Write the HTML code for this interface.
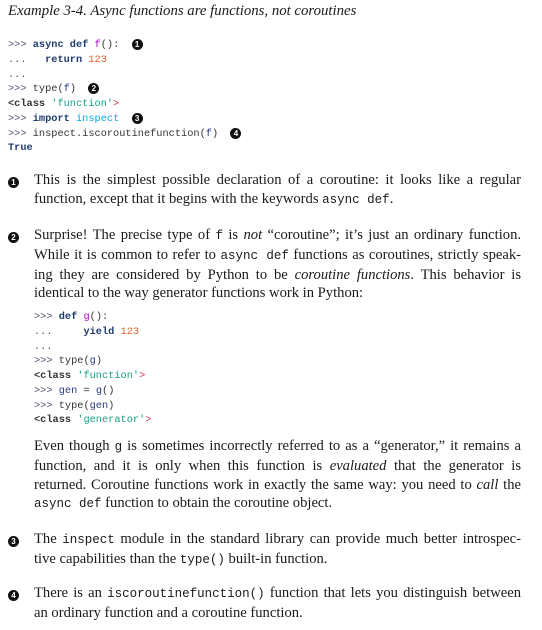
<!DOCTYPE html>
<html><head><meta charset="utf-8"><style>
body{margin:0;width:542px;height:630px;background:#fff;position:relative;overflow:hidden;font-family:"Liberation Serif",serif;color:#1a1a1a}
.a{position:absolute}
.t{left:8px;top:3px;font-style:italic;font-size:14.8px}
.code{font-family:"Liberation Mono",monospace;font-size:10.3px;line-height:14.75px;white-space:pre;color:#333}
.p{color:#4a5070}.k{color:#1f3d6e;font-weight:bold}.m{color:#b000d0}.n{color:#e8602c}.s{color:#16a085}.c{color:#0aa8e0}.kw{font-weight:bold;color:#333}.r{color:#d0304a}.v{color:#2a3a80}
.b{display:inline-block;width:11px;height:11px;border-radius:50%;background:#111;color:#fff;font:bold 8px "Liberation Sans",sans-serif;text-align:center;line-height:11px;vertical-align:0px}
.txt{left:34px;width:487px;font-size:14.6px;line-height:18.8px}
.txt div{text-align:justify;text-align-last:justify;white-space:nowrap}
.txt div.l{text-align-last:left}
.tt{font-family:"Liberation Mono",monospace;font-size:12.5px}
.mk{left:8px}
</style></head><body>
<div class="a t">Example 3-4. Async functions are functions, not coroutines</div>
<div class="a code" style="left:8px;top:38px"><span class="p">&gt;&gt;&gt;</span> <span class="k">async def</span> <span class="m">f</span>():  <span class="b">1</span>
<span class="p">...</span>   <span class="k">return</span> <span class="n">123</span>
<span class="p">...</span>
<span class="p">&gt;&gt;&gt;</span> type(<span class="v">f</span>)  <span class="b">2</span>
<span class="kw">&lt;class</span> <span class="s">'function'</span><span class="r">&gt;</span>
<span class="p">&gt;&gt;&gt;</span> <span class="k">import</span> <span class="c">inspect</span>  <span class="b">3</span>
<span class="p">&gt;&gt;&gt;</span> inspect.iscoroutinefunction(<span class="v">f</span>)  <span class="b">4</span>
<span class="k">True</span></div>

<div class="a mk" style="top:172px"><span class="b">1</span></div>
<div class="a txt" style="top:171px"><div>This is the simplest possible declaration of a coroutine: it looks like a regular</div><div class="l">function, except that it begins with the keywords <span class="tt">async def</span>.</div></div>

<div class="a mk" style="top:227px"><span class="b">2</span></div>
<div class="a txt" style="top:226px"><div>Surprise! The precise type of <span class="tt">f</span> is <i>not</i> “coroutine”; it’s just an ordinary function.</div><div>While it is common to refer to <span class="tt">async def</span> functions as coroutines, strictly speak-</div><div>ing they are considered by Python to be <i>coroutine functions</i>. This behavior is</div><div class="l">identical to the way generator functions work in Python:</div></div>

<div class="a code" style="left:34px;top:310px"><span class="p">&gt;&gt;&gt;</span> <span class="k">def</span> <span class="m">g</span>():
<span class="p">...</span>     <span class="k">yield</span> <span class="n">123</span>
<span class="p">...</span>
<span class="p">&gt;&gt;&gt;</span> type(<span class="v">g</span>)
<span class="kw">&lt;class</span> <span class="s">'function'</span><span class="r">&gt;</span>
<span class="p">&gt;&gt;&gt;</span> <span class="v">gen</span> = <span class="v">g</span>()
<span class="p">&gt;&gt;&gt;</span> type(<span class="v">gen</span>)
<span class="kw">&lt;class</span> <span class="s">'generator'</span><span class="r">&gt;</span></div>

<div class="a txt" style="top:437px"><div>Even though <span class="tt">g</span> is sometimes incorrectly referred to as a “generator,” it remains a</div><div>function, and it is only when this function is <i>evaluated</i> that the generator is</div><div>returned. Coroutine functions work in exactly the same way: you need to <i>call</i> the</div><div class="l"><span class="tt">async def</span> function to obtain the coroutine object.</div></div>

<div class="a mk" style="top:531px"><span class="b">3</span></div>
<div class="a txt" style="top:530px"><div>The <span class="tt">inspect</span> module in the standard library can provide much better introspec-</div><div class="l">tive capabilities than the <span class="tt">type()</span> built-in function.</div></div>

<div class="a mk" style="top:585px"><span class="b">4</span></div>
<div class="a txt" style="top:584px"><div>There is an <span class="tt">iscoroutinefunction()</span> function that lets you distinguish between</div><div class="l">an ordinary function and a coroutine function.</div></div>
</body></html>
